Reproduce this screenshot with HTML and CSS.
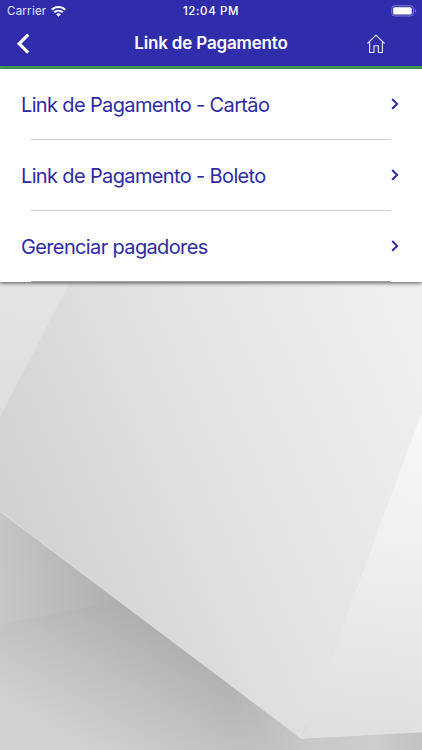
FILE: index.html
```html
<!DOCTYPE html>
<html lang="pt-BR">
<head>
<meta charset="utf-8">
<meta name="viewport" content="width=device-width, initial-scale=1">
<title>Link de Pagamento</title>
<link rel="stylesheet" href="styles.css">
</head>
<body>
<div class="app">
  <header class="header">
    <div class="status">
      <div class="carrier">
        <span>Carrier</span>
        <svg class="wifi" viewBox="0 0 15 11" fill="#fff">
          <path d="M7.5 0C4.6 0 2 1.1 0 2.9l1.4 1.5a9 9 0 0 1 12.2 0L15 2.9A11 11 0 0 0 7.5 0Z"/>
          <path d="M7.5 3.7c-1.9 0-3.6.7-5 1.9l1.5 1.5a5.300 5.300 0 0 1 7 0l1.500-1.500a7.500 7.500 0 0 0-5-1.900Z"/>
          <path d="M7.500 7.300c-.9 0-1.700.3-2.400.9l2.400 2.500 2.400-2.500c-.7-.6-1.500-.9-2.400-.9Z"/>
        </svg>
      </div>
      <time class="clock">12:04 PM</time>
      <svg class="battery" viewBox="0 0 26 12">
        <rect x=".8" y=".8" width="21.600" height="10.200" rx="3" fill="none" stroke="#8280cf"/>
        <rect x="2.200" y="2.200" width="18.500" height="7.400" rx="1.600" fill="#fff"/>
        <path d="M24 4v3.800c1.700-.8 1.700-3 0-3.800Z" fill="#8280cf"/>
      </svg>
    </div>
    <div class="bar">
      <a class="back" aria-label="Voltar"><svg viewBox="0 0 14 21"><path d="M12.200 1.700 3.200 10.700l9 9" fill="none" stroke="#fff" stroke-width="3.200"/></svg></a>
      <h1 class="title">Link de Pagamento</h1>
      <a class="home" aria-label="Início"><svg viewBox="0 0 18 20"><path d="M.8 9.200 9 1.200l8.200 8M2.600 7.900V18.500H7v-6.800h4.400v6.800h4V7.900" fill="none" stroke="#e4e4fa" stroke-width="1.150" stroke-linejoin="round" stroke-linecap="round"/></svg></a>
    </div>
  </header>
  <nav class="menu">
    <a class="item"><span class="label">Link de Pagamento - Cartão</span><svg class="chevron" viewBox="0 0 10 14"><path d="m2.200 2 4.900 4.900-4.900 4.900" fill="none" stroke="#2e2ba4" stroke-width="2"/></svg></a>
    <a class="item"><span class="label">Link de Pagamento - Boleto</span><svg class="chevron" viewBox="0 0 10 14"><path d="m2.200 2 4.900 4.900-4.900 4.900" fill="none" stroke="#2e2ba4" stroke-width="2"/></svg></a>
    <a class="item"><span class="label">Gerenciar pagadores</span><svg class="chevron" viewBox="0 0 10 14"><path d="m2.200 2 4.900 4.900-4.900 4.900" fill="none" stroke="#2e2ba4" stroke-width="2"/></svg></a>
  </nav>
  <svg class="scene" viewBox="0 282 422 468" preserveAspectRatio="none">
    <defs>
      <linearGradient id="main" gradientUnits="userSpaceOnUse" x1="0" y1="470" x2="390" y2="300">
        <stop offset="0" stop-color="#d2d2d2"/><stop offset=".5" stop-color="#e3e3e3"/><stop offset="1" stop-color="#efefef"/>
      </linearGradient>
      <linearGradient id="left" gradientUnits="userSpaceOnUse" x1="20" y1="282" x2="0" y2="415">
        <stop offset="0" stop-color="#e4e4e4"/><stop offset="1" stop-color="#dedede"/>
      </linearGradient>
      <linearGradient id="right" gradientUnits="userSpaceOnUse" x1="410" y1="420" x2="370" y2="735">
        <stop offset="0" stop-color="#f8f8f8"/><stop offset=".5" stop-color="#ededed"/><stop offset="1" stop-color="#dfdfdf"/>
      </linearGradient>
      <linearGradient id="wall" gradientUnits="userSpaceOnUse" x1="0" y1="600" x2="115" y2="585">
        <stop offset="0" stop-color="#c7c7c7"/><stop offset="1" stop-color="#b0b0b0"/>
      </linearGradient>
      <linearGradient id="floor" gradientUnits="userSpaceOnUse" x1="170" y1="635" x2="100" y2="755">
        <stop offset="0" stop-color="#afafaf"/><stop offset=".5" stop-color="#c1c1c1"/><stop offset="1" stop-color="#d1d1d1"/>
      </linearGradient>
      <linearGradient id="corner" gradientUnits="userSpaceOnUse" x1="230" y1="745" x2="422" y2="745">
        <stop offset="0" stop-color="#c6c6c6" stop-opacity="0"/><stop offset=".4" stop-color="#c8c8c8"/><stop offset=".75" stop-color="#cccccc"/><stop offset="1" stop-color="#c2c2c2"/>
      </linearGradient>
    </defs>
    <path d="M0 500H130V620L0 625Z" fill="url(#wall)"/>
    <path d="M0 624.500 119 601 302 725H422V750H0Z" fill="url(#floor)"/>
    <path d="M230 750V680L302 725H422V750Z" fill="url(#corner)"/>
    <path d="M0 282H422V413L301 738 0 511.500Z" fill="url(#main)"/>
    <path d="M0 282H70L0 417Z" fill="url(#left)"/>
    <path d="M422 412V732L301 738.500Z" fill="url(#right)"/>
    <path d="M0 511.500 301 738.300 422 732" fill="none" stroke="#e2e2e2" stroke-width=".7"/>
  </svg>
</div>
</body>
</html>
```
FILE: styles.css
```css
* { box-sizing: border-box; }
body { margin: 0; font-family: Inter, "Liberation Sans", sans-serif; }
.app { width: 422px; height: 750px; display: flex; flex-direction: column; overflow: hidden; background: #ddd; }
.header { height: 68.500px; flex: none; background: #2f2dac; color: #fff; border-bottom: 3px solid #46a05a; }
.status { height: 22px; display: grid; grid-template-columns: 1fr auto 1fr; align-items: center; padding: 0 6px; }
.carrier { display: flex; align-items: center; gap: 5px; padding-left: 1px; font-size: 11.500px; letter-spacing: .25px; color: #e6e6fb; }
.wifi { width: 15px; height: 11px; }
.clock { font-size: 11.500px; font-weight: 500; letter-spacing: .6px; }
.battery { width: 26px; height: 12px; justify-self: end; margin-right: -1px; }
.bar { height: 43px; display: grid; grid-template-columns: 1fr auto 1fr; align-items: center; padding: 0 16px; }
.back, .home { display: flex; }
.back svg { width: 14px; height: 21px; }
.title { margin: 0 0 1px; font-size: 17px; font-weight: 600; line-height: 22px; letter-spacing: -.17px; }
.home { justify-content: flex-end; padding-right: 21px; }
.home svg { width: 18px; height: 20px; }
.menu { height: 213.500px; flex: none; display: flex; flex-direction: column; position: relative; background: #fff; box-shadow: 0 1px 4px rgba(0, 0, 0, .65); }
.item { flex: 1; margin: 0 31px; padding-top: 1px; border-bottom: 1px solid #cfcfcf; display: flex; align-items: center; justify-content: space-between; }
.item:last-child { border-bottom-color: #a5a5a5; }
.label { margin-left: -10px; padding-top: 1px; font-size: 20px; line-height: 26px; letter-spacing: -.64px; color: #2e2ba4; white-space: nowrap; }
.chevron { width: 10px; height: 14px; flex: none; margin-right: -9px; }
.scene { flex: 1; min-height: 0; width: 100%; display: block; }
```
